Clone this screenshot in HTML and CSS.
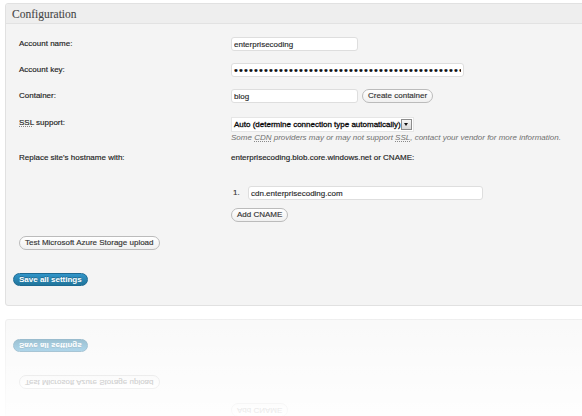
FILE: index.html
```html
<!DOCTYPE html>
<html lang="en">
<head>
<meta charset="utf-8">
<title>Configuration</title>
<link rel="stylesheet" href="styles.css">
</head>
<body>
<div class="page">
  <div class="postbox">
    <h3 class="hndle">Configuration</h3>
    <div class="inside">
      <div class="form">
        <div class="row r1">
          <label class="lbl">Account name:</label>
          <div class="field"><input class="txt w-name" type="text" value="enterprisecoding"></div>
        </div>
        <div class="row r2">
          <label class="lbl">Account key:</label>
          <div class="field"><input class="txt w-key pw" type="password" value="xxxxxxxxxxxxxxxxxxxxxxxxxxxxxxxxxxxxxxxxxxxxxxxxxxxxxxxxxx"></div>
        </div>
        <div class="row r3">
          <label class="lbl">Container:</label>
          <div class="field"><input class="txt w-name" type="text" value="blog"><button class="btn create">Create container</button></div>
        </div>
        <div class="row r4">
          <label class="lbl lbl-top"><abbr title="Secure Sockets Layer">SSL</abbr> support:</label>
          <div class="field col">
            <div class="select"><span class="select-text">Auto (determine connection type automatically)</span><span class="select-arrow"></span></div>
            <p class="desc">Some <abbr title="Content Delivery Network">CDN</abbr> providers may or may not support <abbr title="Secure Sockets Layer">SSL</abbr>, contact your vendor for more information.</p>
          </div>
        </div>
        <div class="row r5">
          <label class="lbl">Replace site's hostname with:</label>
          <div class="field col">
            <p class="host">enterprisecoding.blob.core.windows.net or CNAME:</p>
            <div class="cname"><span class="num">1.</span><input class="txt w-cdn" type="text" value="cdn.enterprisecoding.com"></div>
            <div class="add"><button class="btn">Add CNAME</button></div>
          </div>
        </div>
      </div>
      <div class="test"><button class="btn">Test Microsoft Azure Storage upload</button></div>
      <div class="save"><button class="btn-primary">Save all settings</button></div>
    </div>
  </div>

  <div class="reflection" aria-hidden="true">
    <div class="postbox mirrored">
      <h3 class="hndle">Configuration</h3>
      <div class="inside">
        <div class="form">
          <div class="row r1">
            <span class="lbl">Account name:</span>
            <div class="field"><span class="txt w-name fake">enterprisecoding</span></div>
          </div>
          <div class="row r2">
            <span class="lbl">Account key:</span>
            <div class="field"><span class="txt w-key fake"></span></div>
          </div>
          <div class="row r3">
            <span class="lbl">Container:</span>
            <div class="field"><span class="txt w-name fake">blog</span><span class="btn create">Create container</span></div>
          </div>
          <div class="row r4">
            <span class="lbl lbl-top">SSL support:</span>
            <div class="field col">
              <div class="select"><span class="select-text">Auto (determine connection type automatically)</span><span class="select-arrow"></span></div>
              <p class="desc">Some CDN providers may or may not support SSL, contact your vendor for more information.</p>
            </div>
          </div>
          <div class="row r5">
            <span class="lbl">Replace site's hostname with:</span>
            <div class="field col">
              <p class="host">enterprisecoding.blob.core.windows.net or CNAME:</p>
              <div class="cname"><span class="num">1.</span><span class="txt w-cdn fake">cdn.enterprisecoding.com</span></div>
              <div class="add"><span class="btn">Add CNAME</span></div>
            </div>
          </div>
        </div>
        <div class="test"><span class="btn">Test Microsoft Azure Storage upload</span></div>
        <div class="save"><span class="btn-primary">Save all settings</span></div>
      </div>
    </div>
  </div>
</div>
</body>
</html>
```
FILE: styles.css
```css
html, body {
  margin: 0;
  padding: 0;
  overflow: hidden;
  background: #ffffff;
}
body {
  font-family: "Liberation Sans", Arial, sans-serif;
  font-size: 8px;
  line-height: 10px;
  color: #222222;
  -webkit-text-stroke: 0.15px currentColor;
}
.page {
  padding: 3px 0 0 5px;
}
.postbox {
  width: 600px;
  background: #f4f4f4;
  border: 1px solid #e1e1e1;
  border-radius: 3px 0 0 3px;
}
.hndle {
  margin: 0;
  height: 19px;
  line-height: 20px;
  padding-left: 6px;
  font-family: "Liberation Serif", "Times New Roman", serif;
  font-size: 11.5px;
  font-weight: normal;
  color: #464646;
  -webkit-text-stroke: 0.1px currentColor;
  background: #eeeeee;
  border-bottom: 1px solid #e2e2e2;
  border-radius: 3px 0 0 0;
}
.inside {
  padding: 0 0 19px 7px;
}
.form {
  padding: 13px 0 0 6px;
}
.row {
  display: flex;
  align-items: center;
}
.lbl {
  width: 212px;
  flex: none;
}
.r4, .r5 {
  align-items: flex-start;
}
.lbl-top {
  padding-top: 1px;
}
.r2, .r3 {
  margin-top: 12px;
}
.r4 {
  margin-top: 14px;
}
.r5 {
  margin-top: 10px;
}
.field {
  display: flex;
  align-items: center;
}
.field.col {
  flex-direction: column;
  align-items: flex-start;
}
abbr {
  text-decoration: underline dotted #8a8a8a;
  text-underline-offset: 1px;
}
.txt {
  box-sizing: border-box;
  display: block;
  height: 14px;
  margin: 0;
  padding: 0 2px;
  font: inherit;
  line-height: 12px;
  color: #2a2a2a;
  background: #ffffff;
  border: 1px solid #dedede;
  border-radius: 3px;
  outline: none;
}
.w-name { width: 127px; }
.w-key { width: 233px; }
.w-cdn { width: 235px; }
.pw {
  font-size: 11px;
  letter-spacing: 1.15px;
  color: #111111;
}
.btn {
  box-sizing: border-box;
  display: inline-block;
  height: 14px;
  margin: 0;
  padding: 0 5px;
  font: inherit;
  line-height: 12px;
  color: #333333;
  background: linear-gradient(#ffffff, #f0f0f0);
  border: 1px solid #bbbbbb;
  border-radius: 7px;
  white-space: nowrap;
}
.create {
  margin-left: 4px;
}
.select {
  box-sizing: border-box;
  display: flex;
  align-items: center;
  width: 183px;
  height: 15px;
  background: #ffffff;
  border: 1px solid #e6e6e6;
  padding-left: 2px;
}
.select-text {
  flex: 1;
  color: #0a0a0a;
  -webkit-text-stroke: 0.3px currentColor;
  white-space: nowrap;
}
.select-arrow {
  position: relative;
  box-sizing: border-box;
  width: 11px;
  height: 11px;
  margin-right: 1px;
  background: linear-gradient(#f6f6f6, #d8d8d8);
  border: 1px solid #8c8c8c;
}
.select-arrow::after {
  content: "";
  position: absolute;
  left: 2px;
  top: 3px;
  border-left: 2.5px solid transparent;
  border-right: 2.5px solid transparent;
  border-top: 3px solid #111111;
}
.desc {
  margin: 1px 0 0 0;
  font-style: italic;
  color: #707070;
  -webkit-text-stroke: 0;
  white-space: nowrap;
}
.host {
  margin: 0;
  white-space: nowrap;
}
.cname {
  display: flex;
  align-items: center;
  margin-top: 23px;
}
.num {
  width: 15px;
  padding-left: 2px;
  color: #333333;
}
.add {
  margin-top: 8px;
}
.test {
  margin-top: 14px;
  padding-left: 6px;
}
.save {
  margin-top: 23px;
}
.btn-primary {
  box-sizing: border-box;
  display: inline-block;
  height: 13px;
  margin: 0;
  padding: 0 5px;
  font: inherit;
  font-weight: bold;
  line-height: 11px;
  color: #ffffff;
  -webkit-text-stroke: 0;
  text-shadow: 0 -1px 0 rgba(0, 0, 0, 0.25);
  background: linear-gradient(#3195c9, #21759b);
  border: 1px solid #1e6a92;
  border-radius: 7px;
  white-space: nowrap;
}

/* mirrored reflection below the box */
.reflection {
  position: relative;
  height: 97px;
  margin-top: 13px;
  overflow: hidden;
}
.reflection::after {
  content: "";
  position: absolute;
  inset: 0;
  background: linear-gradient(to bottom, rgba(255, 255, 255, 0.45) 0, rgba(255, 255, 255, 0.93) 97px);
}
.mirrored {
  transform: scaleY(-1);
}
.fake {
  line-height: 12px;
}
```
